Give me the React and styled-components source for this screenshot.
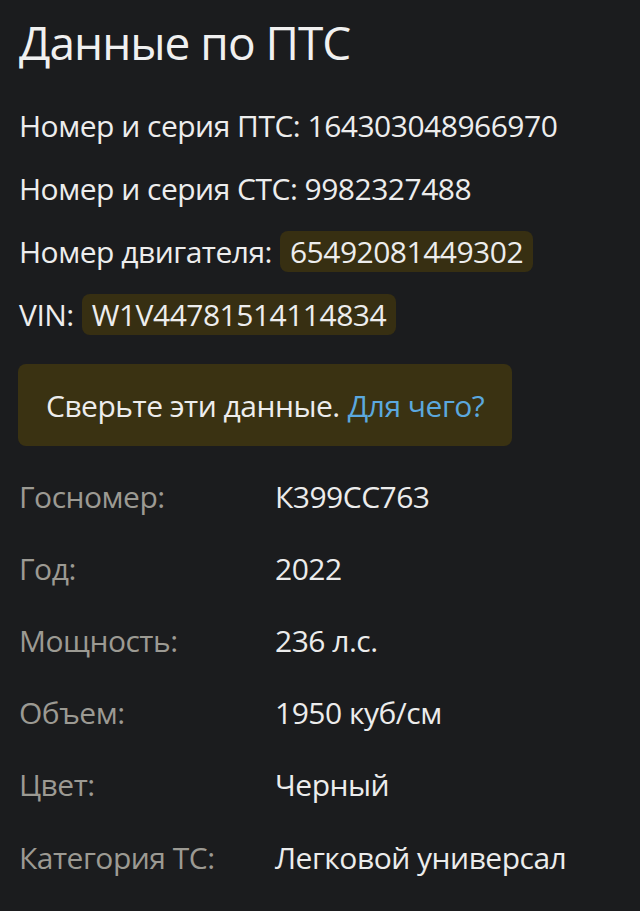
import React from 'react';
import styled, { createGlobalStyle } from 'styled-components';

const GlobalStyle = createGlobalStyle`
  html, body {
    margin: 0;
    padding: 0;
    background: #1b1c1e;
  }
  body {
    font-family: 'Open Sans', 'DejaVu Sans', sans-serif;
    color: #ececec;
  }
`;

const Page = styled.div`
  min-height: 911px;
  padding: 12px 19px 0;
  box-sizing: border-box;
  background: #1b1c1e;
`;

const Title = styled.h1`
  margin: 0 0 22px;
  font-size: 46px;
  line-height: 60px;
  font-weight: 500;
  letter-spacing: -1px;
  color: #f0f0f0;
`;

const Line = styled.div`
  display: flex;
  align-items: center;
  height: 63px;
  font-size: 30px;
  letter-spacing: -0.5px;
  color: #ededed;
  white-space: nowrap;
`;

const Chip = styled.span`
  display: inline-flex;
  align-items: center;
  height: 41px;
  margin-left: 8px;
  padding: 0 10px;
  border-radius: 8px;
  background: #372f12;
`;

const Callout = styled.div`
  display: inline-flex;
  align-items: center;
  height: 82px;
  margin: 18px 0 14px -1px;
  padding: 0 28px;
  border-radius: 8px;
  background: #3a3212;
  font-size: 30px;
  letter-spacing: -0.5px;
  color: #ededed;
  white-space: nowrap;
`;

const Link = styled.a`
  color: #5ba8de;
  text-decoration: none;
  margin-left: 8px;
`;

const Table = styled.div`
  display: grid;
  grid-template-columns: 256px 1fr;
  grid-auto-rows: 72.2px;
  align-items: center;
  font-size: 30px;
  letter-spacing: -0.5px;
`;

const Label = styled.div`
  color: #9c9a93;
`;

const Value = styled.div`
  color: #ececec;
`;

const specs = [
  ['Госномер:', 'К399СС763'],
  ['Год:', '2022'],
  ['Мощность:', '236 л.с.'],
  ['Объем:', '1950 куб/см'],
  ['Цвет:', 'Черный'],
  ['Категория ТС:', 'Легковой универсал'],
];

export default function App() {
  return (
    <Page>
      <GlobalStyle />
      <Title>Данные по ПТС</Title>
      <Line>Номер и серия ПТС: 164303048966970</Line>
      <Line>Номер и серия СТС: 9982327488</Line>
      <Line>
        Номер двигателя:<Chip>65492081449302</Chip>
      </Line>
      <Line>
        VIN:<Chip>W1V44781514114834</Chip>
      </Line>
      <Callout>
        Сверьте эти данные.<Link href="#">Для чего?</Link>
      </Callout>
      <Table>
        {specs.map(([label, value]) => (
          <React.Fragment key={label}>
            <Label>{label}</Label>
            <Value>{value}</Value>
          </React.Fragment>
        ))}
      </Table>
    </Page>
  );
}
